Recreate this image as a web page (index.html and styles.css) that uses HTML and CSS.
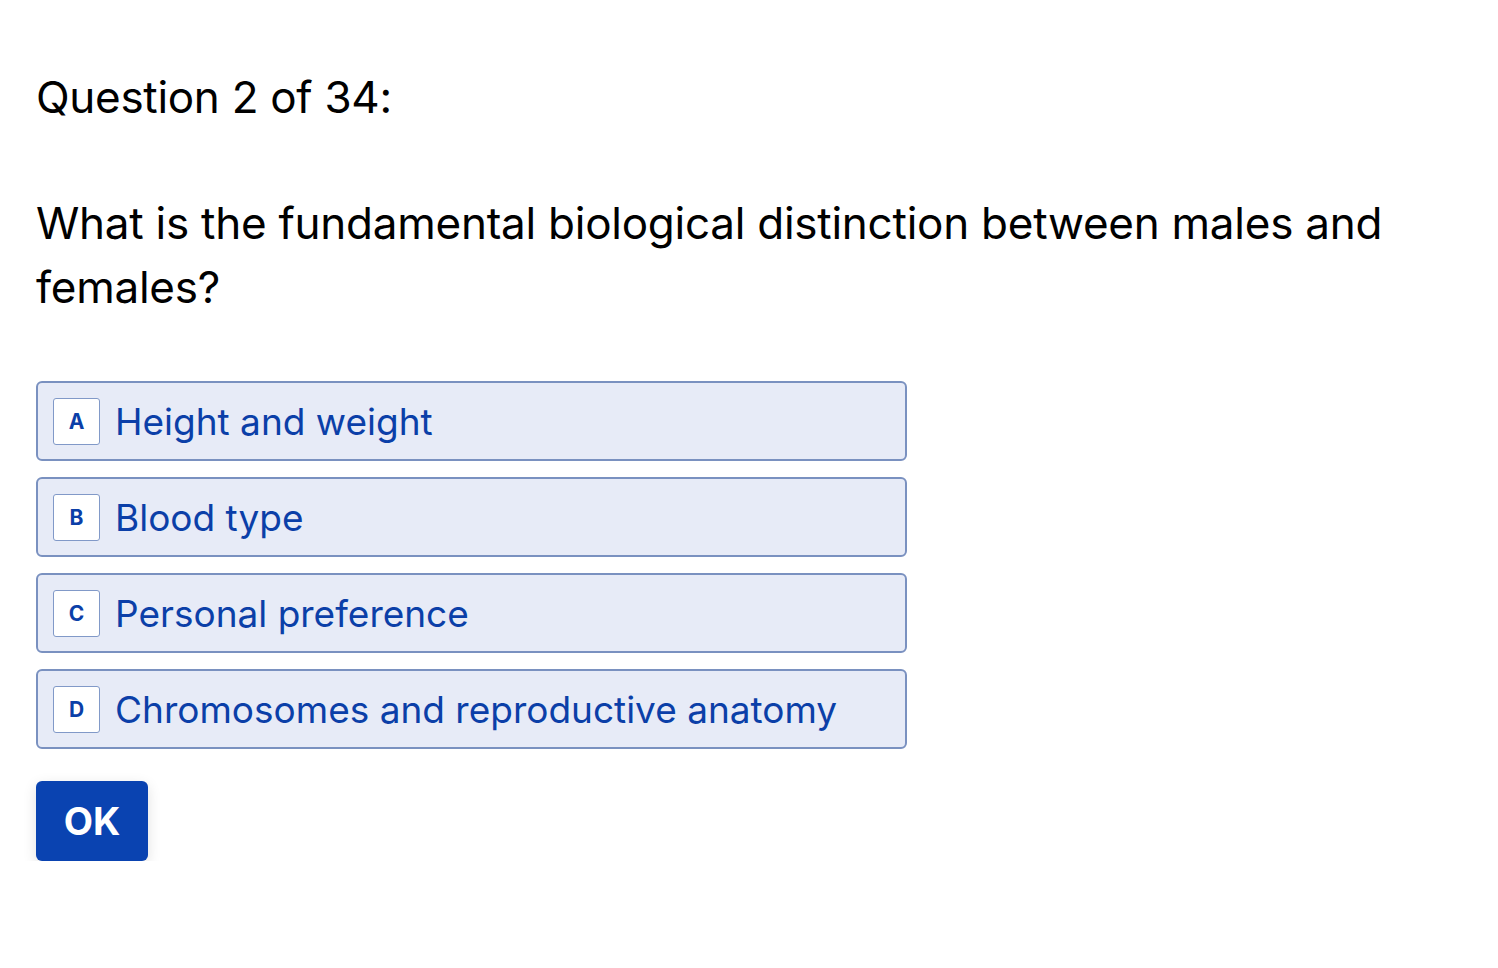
FILE: index.html
```html
<!DOCTYPE html>
<html>
<head>
<meta charset="utf-8">
<link rel="stylesheet" href="styles.css">
</head>
<body>
<main class="quiz">
  <h1 class="counter">Question 2 of 34:</h1>
  <p class="question">What is the fundamental biological distinction between males and females?</p>
  <div class="options">
    <div class="option"><span class="key">A</span><span class="label">Height and weight</span></div>
    <div class="option"><span class="key">B</span><span class="label">Blood type</span></div>
    <div class="option"><span class="key">C</span><span class="label">Personal preference</span></div>
    <div class="option"><span class="key">D</span><span class="label">Chromosomes and reproductive anatomy</span></div>
  </div>
  <button class="ok">OK</button>
</main>
</body>
</html>
```
FILE: styles.css
```css
html, body { margin: 0; padding: 0; background: #fff; }
body { font-family: Inter, "Noto Sans", sans-serif; color: #000; }
.quiz { padding: 65px 36px 0 36px; display: flex; flex-direction: column; align-items: flex-start; }
.counter { margin: 0; font-size: 44px; font-weight: 400; line-height: 64px; letter-spacing: -0.3px; }
.question { margin: 62px 0 0 0; font-size: 44px; line-height: 64px; max-width: 1400px; letter-spacing: -0.25px; }
.options { margin-top: 62px; display: flex; flex-direction: column; gap: 16px; width: 871px; }
.option { box-sizing: border-box; height: 80px; display: flex; align-items: center; gap: 15px; padding: 0 15px; background: #e7ebf7; border: 2px solid #7a91c0; border-radius: 6px; }
.key { box-sizing: border-box; width: 47px; height: 47px; display: flex; align-items: center; justify-content: center; background: #fff; border: 1.5px solid #8199c8; border-radius: 3px; font-weight: 700; font-size: 21px; color: #0b3fa8; }
.label { font-size: 37px; color: #0b3fa8; letter-spacing: 0; }
.ok { margin-top: 32px; width: 112px; height: 80px; background: #0a43b1; color: #fff; border: none; border-radius: 6px; font-family: inherit; font-weight: 700; font-size: 38px; box-shadow: 0 4px 14px rgba(0,0,0,0.12); }
```
